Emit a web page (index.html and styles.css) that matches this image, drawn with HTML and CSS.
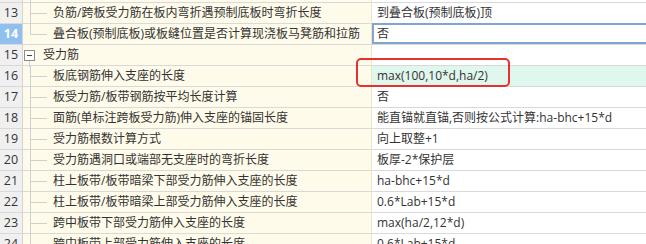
FILE: index.html
```html
<!DOCTYPE html>
<html lang="zh-CN">
<head>
<meta charset="utf-8">
<title>属性设置</title>
<link rel="stylesheet" href="styles.css">
</head>
<body>
<div class="grid">
  <div class="row row-cut">
    <div class="num"></div>
    <div class="name"><span class="guide"></span></div>
    <div class="val"></div>
  </div>
  <div class="row">
    <div class="num">13</div>
    <div class="name"><span class="guide"></span><span class="label">负筋/跨板受力筋在板内弯折遇预制底板时弯折长度</span></div>
    <div class="val">到叠合板(预制底板)顶</div>
  </div>
  <div class="row">
    <div class="num num-active">14</div>
    <div class="name"><span class="guide guide-last"></span><span class="label">叠合板(预制底板)或板缝位置是否计算现浇板马凳筋和拉筋</span></div>
    <div class="val val-edit">否</div>
  </div>
  <div class="row">
    <div class="num">15</div>
    <div class="name"><span class="toggle"></span><span class="label">受力筋</span></div>
    <div class="val"></div>
  </div>
  <div class="row">
    <div class="num">16</div>
    <div class="name"><span class="guide"></span><span class="label">板底钢筋伸入支座的长度</span></div>
    <div class="val val-changed">max(100,10*d,ha/2)</div>
  </div>
  <div class="row">
    <div class="num">17</div>
    <div class="name"><span class="guide"></span><span class="label">板受力筋/板带钢筋按平均长度计算</span></div>
    <div class="val">否</div>
  </div>
  <div class="row">
    <div class="num">18</div>
    <div class="name"><span class="guide"></span><span class="label">面筋(单标注跨板受力筋)伸入支座的锚固长度</span></div>
    <div class="val">能直锚就直锚,否则按公式计算:ha-bhc+15*d</div>
  </div>
  <div class="row">
    <div class="num">19</div>
    <div class="name"><span class="guide"></span><span class="label">受力筋根数计算方式</span></div>
    <div class="val">向上取整+1</div>
  </div>
  <div class="row">
    <div class="num">20</div>
    <div class="name"><span class="guide"></span><span class="label">受力筋遇洞口或端部无支座时的弯折长度</span></div>
    <div class="val">板厚-2*保护层</div>
  </div>
  <div class="row">
    <div class="num">21</div>
    <div class="name"><span class="guide"></span><span class="label">柱上板带/板带暗梁下部受力筋伸入支座的长度</span></div>
    <div class="val">ha-bhc+15*d</div>
  </div>
  <div class="row">
    <div class="num">22</div>
    <div class="name"><span class="guide"></span><span class="label">柱上板带/板带暗梁上部受力筋伸入支座的长度</span></div>
    <div class="val">0.6*Lab+15*d</div>
  </div>
  <div class="row">
    <div class="num">23</div>
    <div class="name"><span class="guide"></span><span class="label">跨中板带下部受力筋伸入支座的长度</span></div>
    <div class="val">max(ha/2,12*d)</div>
  </div>
  <div class="row">
    <div class="num">24</div>
    <div class="name"><span class="guide"></span><span class="label">跨中板带上部受力筋伸入支座的长度</span></div>
    <div class="val">0.6*Lab+15*d</div>
  </div>
</div>
<div class="callout"></div>
</body>
</html>
```
FILE: styles.css
```css
html, body {
  margin: 0;
  padding: 0;
}
body {
  width: 646px;
  height: 244px;
  overflow: hidden;
  position: relative;
  background: #ffffff;
  font-family: "Open Sans", "Noto Sans CJK SC", sans-serif;
  font-size: 12px;
  color: #333333;
}
.grid {
  display: flex;
  flex-direction: column;
}
.row {
  display: flex;
  height: 21px;
  flex: none;
}
.row-cut {
  height: 3px;
}
.num, .name, .val {
  box-sizing: border-box;
  height: 100%;
  border-bottom: 1px solid #d9d9d9;
  line-height: 20px;
  white-space: nowrap;
}
.num {
  width: 23px;
  flex: none;
  background: #f0f0f0;
  border-right: 1px solid #d4d4d4;
  text-align: center;
  color: #333333;
  font-size: 12.5px;
}
.num-active {
  background: #8fc0ef;
  color: #ffffff;
  font-weight: bold;
}
.name {
  width: 349px;
  flex: none;
  display: flex;
  align-items: stretch;
  background: #fffbea;
  border-right: 1px solid #eee5c8;
}
.guide {
  flex: none;
  width: 23px;
  margin-left: 7px;
  position: relative;
}
.guide::before {
  content: "";
  position: absolute;
  left: 0;
  top: 0;
  bottom: -1px;
  border-left: 1px solid #d0d0d0;
}
.guide::after {
  content: "";
  position: absolute;
  left: 0;
  top: 10px;
  width: 17px;
  border-top: 1px solid #d0d0d0;
}
.row-cut .guide::after {
  display: none;
}
.guide-last::before {
  bottom: auto;
  height: 11px;
}
.toggle {
  flex: none;
  align-self: center;
  box-sizing: border-box;
  width: 11px;
  height: 11px;
  margin-left: 1px;
  margin-right: 8px;
  border: 1px solid #8c8c8c;
  background: #ffffff;
  position: relative;
}
.toggle::before {
  content: "";
  position: absolute;
  left: 2px;
  right: 2px;
  top: 4px;
  border-top: 1px solid #444444;
}
.toggle::after {
  content: "";
  position: absolute;
  left: 4px;
  top: 10px;
  height: 6px;
  border-left: 1px solid #d0d0d0;
}
.label {
  display: block;
}
.val {
  flex: 1;
  padding-left: 5px;
  background: #ffffff;
}
.val-edit {
  position: relative;
}
.val-edit::after {
  content: "";
  position: absolute;
  left: 0;
  right: -6px;
  top: -1px;
  bottom: 0;
  box-shadow: inset 0 0 0 2px #7fa6cf;
}
.val-changed {
  background: #e0f7ed;
}
.callout {
  position: absolute;
  left: 356px;
  top: 58px;
  width: 154px;
  height: 29px;
  box-sizing: border-box;
  border: 2px solid #e5322d;
  border-radius: 5px;
}
```
